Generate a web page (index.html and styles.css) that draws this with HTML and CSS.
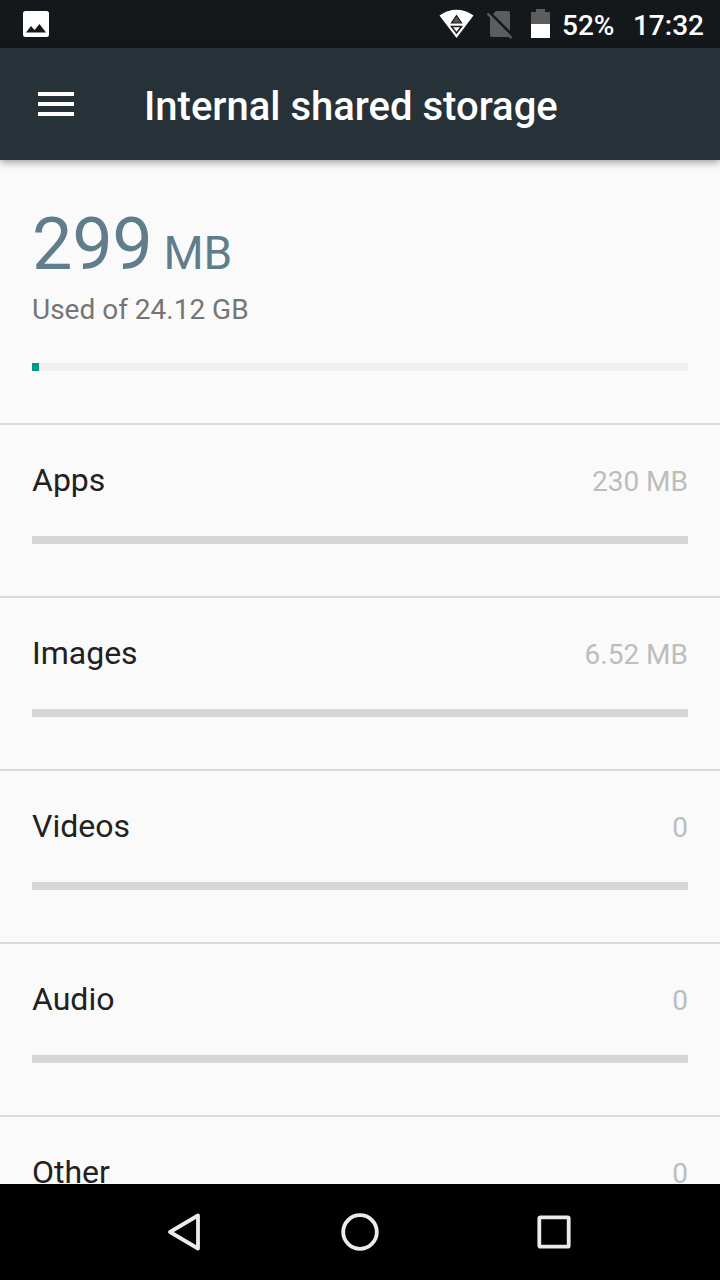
FILE: index.html
```
<!DOCTYPE html>
<html lang="en">
<head>
<meta charset="utf-8">
<title>Internal shared storage</title>
<link rel="stylesheet" href="styles.css">
</head>
<body>

<div class="statusbar">
  <svg class="notification" width="26" height="26" viewBox="0 0 26 26">
    <rect width="26" height="26" rx="2.500" fill="#fff"/>
    <path d="M3 21.500 8 15l3.500 4L16.500 13l6.500 8.500z" fill="#14181b"/>
  </svg>
  <div class="status-icons">
    <svg class="wifi" width="36" height="30" viewBox="0 0 36 30">
      <path d="M.5 6.500C11-1.200 24-1.200 34.500 6.500L17.500 29z" fill="#fff"/>
      <path d="M17.500 6.500 22.500 14h-10z" fill="#555" stroke="#14181b" stroke-width="1.200"/>
      <path d="M12.500 17.500h10l-5 6.500z" fill="#fff" stroke="#14181b" stroke-width="1.500"/>
    </svg>
    <svg class="sim" width="28" height="30" viewBox="0 0 28 30">
      <path d="M11 1h12a2 2 0 0 1 2 2v22a2 2 0 0 1-2 2H7a2 2 0 0 1-2-2V7z" fill="#5b5d5f"/>
      <path d="M4 2 28 26" stroke="#14181b" stroke-width="3"/>
      <path d="M2.500 3.500 26.500 28" stroke="#5b5d5f" stroke-width="2.500"/>
    </svg>
    <svg class="battery" width="19" height="29" viewBox="0 0 19 29">
      <path d="M5 0h9v3h5v12H0V3h5z" fill="#5b5d5f"/>
      <path d="M0 15h19v14H0z" fill="#fff"/>
    </svg>
    <span class="percent">52%</span>
    <span class="clock">17:32</span>
  </div>
</div>

<div class="toolbar">
  <svg class="menu" width="36" height="24" viewBox="0 0 36 24">
    <path d="M0 0h36v4H0zM0 10h36v4H0zM0 20h36v4H0z" fill="#fff"/>
  </svg>
  <h1>Internal shared storage</h1>
</div>

<div class="content">
  <div class="summary">
    <div class="total">299<span class="unit"> MB</span></div>
    <div class="used">Used of 24.12 GB</div>
    <div class="bar"><div class="fill"></div></div>
  </div>
  <div class="item">
    <div class="line"><span class="name">Apps</span><span class="size">230 MB</span></div>
    <div class="bar"></div>
  </div>
  <div class="item">
    <div class="line"><span class="name">Images</span><span class="size">6.52 MB</span></div>
    <div class="bar"></div>
  </div>
  <div class="item">
    <div class="line"><span class="name">Videos</span><span class="size">0</span></div>
    <div class="bar"></div>
  </div>
  <div class="item">
    <div class="line"><span class="name">Audio</span><span class="size">0</span></div>
    <div class="bar"></div>
  </div>
  <div class="item">
    <div class="line"><span class="name">Other</span><span class="size">0</span></div>
    <div class="bar"></div>
  </div>
</div>

<div class="navbar">
  <svg class="back" width="38" height="40" viewBox="0 0 38 40">
    <path d="M33 3.500v33L5 20z" fill="none" stroke="#ebebeb" stroke-width="3.800" stroke-linejoin="round"/>
  </svg>
  <svg class="home" width="38" height="40" viewBox="0 0 38 40">
    <circle cx="19" cy="20" r="16.800" fill="none" stroke="#ebebeb" stroke-width="3.800"/>
  </svg>
  <svg class="recent" width="38" height="40" viewBox="0 0 38 40">
    <rect x="4.300" y="5.300" width="29.400" height="29.400" rx="1" fill="none" stroke="#ebebeb" stroke-width="3.800"/>
  </svg>
</div>

</body>
</html>
```

FILE: styles.css
```
html, body { margin: 0; padding: 0; }
body {
  display: flex; flex-direction: column;
  height: 1280px; overflow: hidden;
  font-family: Roboto, "Liberation Sans", sans-serif;
  background: #fafafa; color: #212121;
}
svg { display: block; flex: none; }

.statusbar {
  display: flex; justify-content: space-between;
  box-sizing: border-box; height: 48px; flex: none;
  padding: 9px 16px 0 23px;
  background: #14181b; color: #fff;
  font-size: 28px; line-height: 33px; font-weight: 500;
}
.notification { margin-top: 2px; }
.status-icons { display: flex; }
.wifi { margin-right: 10px; }
.sim { margin-right: 18px; margin-top: 1px; }
.battery { margin-right: 12.5px; }
.percent { margin-right: 18.5px; }

.toolbar {
  display: flex; align-items: flex-start;
  box-sizing: border-box; height: 112px; flex: none;
  padding: 35px 38px 0;
  background: #263238; color: #fff;
  box-shadow: 0 2px 8px rgba(0,0,0,.4);
  z-index: 1;
}
.menu { margin: 9px 70px 0 0; }
h1 { margin: 0; font-size: 40px; line-height: 48px; font-weight: 500; }

.content { flex: 1; min-height: 0; overflow: hidden; }
.summary { box-sizing: border-box; height: 263px; padding: 43px 32px 0; }
.total { font-size: 72px; line-height: 84px; height: 84px; color: #607d8b; letter-spacing: -.3px; }
.unit { font-size: 46px; line-height: 46px; }
.used { margin-top: 6px; font-size: 28px; line-height: 33px; color: #757575; }
.summary .bar { margin-top: 37px; background: #f0f0f0; }
.bar { height: 8px; background: #d6d6d6; }
.fill { width: 7px; height: 8px; background: #009688; }

.item {
  box-sizing: border-box; height: 173px;
  padding: 36px 32px 0;
  border-top: 2px solid #dadada;
}
.line { display: flex; justify-content: space-between; align-items: baseline; height: 38px; margin-bottom: 37px; }
.name { font-size: 32px; line-height: 38px; }
.size { font-size: 28px; line-height: 33px; color: #bdbdbd; }

.navbar {
  display: flex; align-items: center;
  box-sizing: border-box; height: 96px; flex: none;
  padding-left: 165px;
  background: #000;
}
.home { margin: 0 156px 0 138px; }
```
